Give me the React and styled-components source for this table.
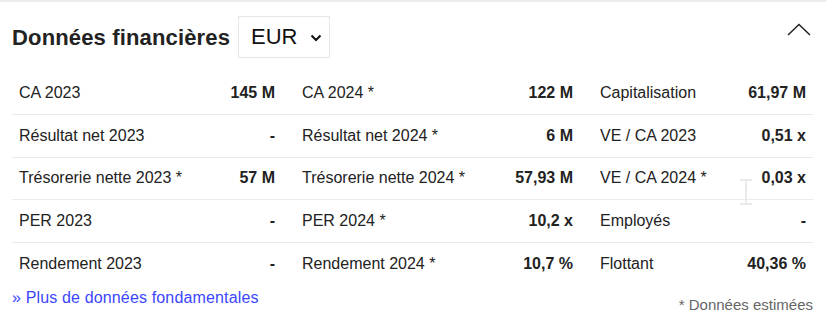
import React from 'react';
import styled, { createGlobalStyle } from 'styled-components';

const Global = createGlobalStyle`
  body {
    margin: 0;
    background: #fff;
    font-family: "Liberation Sans", Arial, sans-serif;
    color: #222;
  }
`;

const Panel = styled.div`
  position: relative;
  width: 826px;
  height: 325px;
  box-sizing: border-box;
  border-top: 2px solid #ebebeb;
  padding: 0 13px 0 12px;
`;

const Header = styled.div`
  display: flex;
  align-items: center;
  height: 70.3px;
  padding-top: 1px;
  box-sizing: border-box;
`;

const Title = styled.h2`
  margin: 0;
  font-size: 22px;
  letter-spacing: 0.15px;
  font-weight: bold;
  color: #222;
`;

const Currency = styled.div`
  display: flex;
  align-items: center;
  box-sizing: border-box;
  width: 92px;
  height: 42px;
  margin-left: 8px;
  margin-top: -1px;
  padding: 0 0 0 12px;
  border: 1px solid #e6e6e6;
  font-size: 22px;
  color: #111;
  svg { margin-left: 12px; margin-top: 2px; }
`;

const Toggle = styled.div`
  margin-left: auto;
  margin-right: 2px;
  margin-top: -16px;
  display: flex;
`;

const Table = styled.div`
  display: flex;
  flex-direction: column;
`;

const Row = styled.div`
  display: grid;
  grid-template-columns: 270px 298px 1fr;
  height: 42.67px;
  box-sizing: border-box;
  border-bottom: ${p => (p.$last ? 'none' : '1px solid #ebebeb')};
`;

const Cell = styled.div`
  display: flex;
  align-items: center;
  justify-content: space-between;
  padding: 0 7px 0 ${p => (p.$first ? '7px' : '20px')};
  font-size: 16px;
`;

const Label = styled.span`
  color: #222;
`;

const Value = styled.span`
  font-weight: bold;
  color: #222;
`;

const Footer = styled.div`
  display: flex;
  justify-content: space-between;
  align-items: flex-start;
  padding-top: 2px;
`;

const More = styled.a`
  font-size: 16px;
  letter-spacing: 0.15px;
  color: #3a46ff;
  text-decoration: none;
  line-height: 20px;
`;

const Note = styled.span`
  font-size: 15px;
  color: #666;
  margin-top: 7px;
  line-height: 20px;
`;

const Cursor = styled.svg`
  position: absolute;
  left: 739px;
  top: 177px;
`;

const rows = [
  [['CA 2023', '145 M'], ['CA 2024 *', '122 M'], ['Capitalisation', '61,97 M']],
  [['Résultat net 2023', '-'], ['Résultat net 2024 *', '6 M'], ['VE / CA 2023', '0,51 x']],
  [['Trésorerie nette 2023 *', '57 M'], ['Trésorerie nette 2024 *', '57,93 M'], ['VE / CA 2024 *', '0,03 x']],
  [['PER 2023', '-'], ['PER 2024 *', '10,2 x'], ['Employés', '-']],
  [['Rendement 2023', '-'], ['Rendement 2024 *', '10,7 %'], ['Flottant', '40,36 %']],
];

export default function App() {
  return (
    <>
      <Global />
      <Panel>
        <Header>
          <Title>Données financières</Title>
          <Currency>
            EUR
            <svg width="12" height="8" viewBox="0 0 12 8">
              <path d="M1.5 1.5 L6 6 L10.5 1.5" fill="none" stroke="#111" strokeWidth="2" />
            </svg>
          </Currency>
          <Toggle>
            <svg width="24" height="13" viewBox="0 0 24 13">
              <path d="M1 12 L12 1.5 L23 12" fill="none" stroke="#222" strokeWidth="1.5" />
            </svg>
          </Toggle>
        </Header>
        <Table>
          {rows.map((r, i) => (
            <Row key={i} $last={i === rows.length - 1}>
              {r.map(([l, v], j) => (
                <Cell key={j} $first={j === 0}>
                  <Label>{l}</Label>
                  <Value>{v}</Value>
                </Cell>
              ))}
            </Row>
          ))}
        </Table>
        <Footer>
          <More href="#">» Plus de données fondamentales</More>
          <Note>* Données estimées</Note>
        </Footer>
        <Cursor width="14" height="26" viewBox="0 0 14 26">
          <path d="M1 1 H13 M7 1 V25 M1 25 H13" fill="none" stroke="#e4e4e4" strokeWidth="1.5" />
        </Cursor>
      </Panel>
    </>
  );
}
